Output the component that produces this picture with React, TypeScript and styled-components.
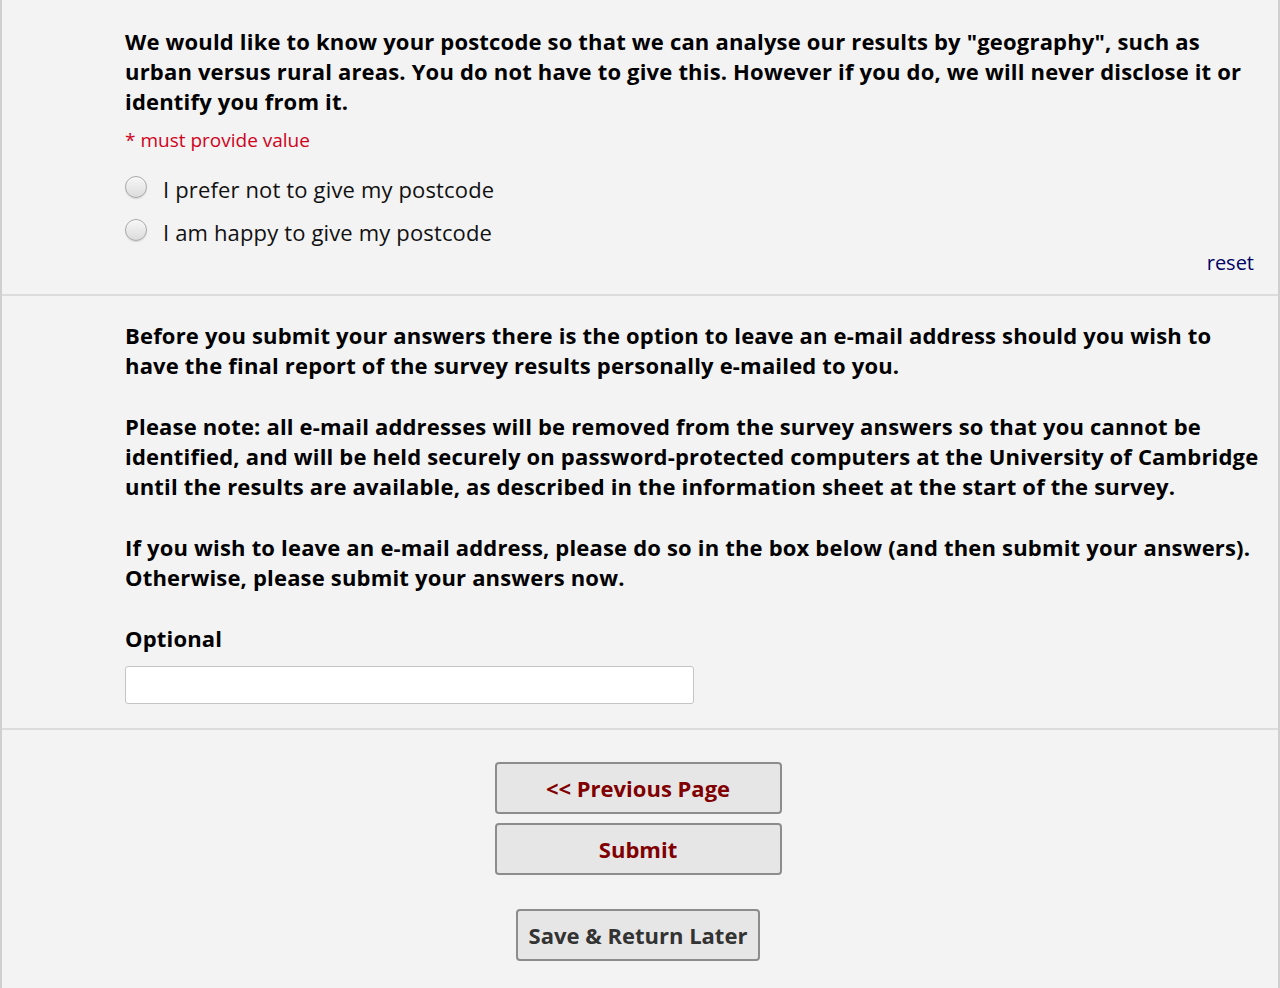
import React, { useState } from 'react'
import styled, { createGlobalStyle } from 'styled-components'

const GlobalStyle = createGlobalStyle`
  html, body {
    margin: 0;
    padding: 0;
    background: #f3f3f3;
  }
  body {
    font-family: 'Open Sans', 'Noto Sans', Arial, sans-serif;
    color: #000;
  }
`

const Page = styled.div`
  width: 1280px;
  min-height: 988px;
  box-sizing: border-box;
  border-left: 2px solid #cfcfcf;
  border-right: 2px solid #cfcfcf;
  background: #f3f3f3;
`

const Section = styled.div<{ $top?: number; $bottom?: number }>`
  padding: ${({ $top = 26 }) => $top}px 24px ${({ $bottom = 24 }) => $bottom}px 123px;
  border-bottom: 2px solid #dcdcdc;
`

const Question = styled.div`
  font-size: 22px;
  line-height: 30px;
  font-weight: 700;
  letter-spacing: 0.18px;
  white-space: nowrap;
`

const Para = styled(Question)`
  & + & {
    margin-top: 31px;
  }
`

const Required = styled.div`
  color: #d0021b;
  font-size: 19px;
  line-height: 26px;
  margin-top: 11px;
`

const Choices = styled.div`
  display: flex;
  flex-direction: column;
  gap: 13px;
  margin-top: 21px;
`

const Choice = styled.label`
  display: flex;
  align-items: center;
  gap: 16px;
  font-size: 22px;
  letter-spacing: 0.15px;
  line-height: 30px;
  color: #111;
  cursor: pointer;
`

const Radio = styled.span<{ $checked: boolean }>`
  width: 22px;
  height: 22px;
  margin-top: -5px;
  border-radius: 50%;
  box-sizing: border-box;
  border: 1px solid #a8a8a8;
  background: linear-gradient(#f7f7f7, #dcdcdc);
  box-shadow: inset 0 1px 1px rgba(255, 255, 255, 0.8), 0 1px 1px rgba(0, 0, 0, 0.12);
  display: flex;
  align-items: center;
  justify-content: center;
  flex-shrink: 0;

  &::after {
    content: '';
    width: 10px;
    height: 10px;
    border-radius: 50%;
    background: #333;
    display: ${({ $checked }) => ($checked ? 'block' : 'none')};
  }
`

const ResetRow = styled.div`
  display: flex;
  justify-content: flex-end;
  margin-top: 3px;
`

const ResetLink = styled.a`
  color: #000066;
  font-size: 20px;
  line-height: 26px;
  text-decoration: none;
  cursor: pointer;
`

const FieldLabel = styled(Question)`
  margin-top: 31px;
`

const TextInput = styled.input`
  display: block;
  margin-top: 13px;
  width: 569px;
  height: 38px;
  box-sizing: border-box;
  border: 1px solid #c4c4c4;
  border-radius: 3px;
  background: #fff;
  font-family: inherit;
  font-size: 18px;
  padding: 4px 8px;
  outline: none;
`

const Buttons = styled.div`
  display: flex;
  flex-direction: column;
  align-items: center;
  gap: 9px;
  padding: 32px 4px 0 0;
`

const SaveRow = styled.div`
  display: flex;
  justify-content: center;
  padding: 34px 4px 0 0;
`

const Button = styled.button<{ $width: number; $tone?: 'red' | 'dark' }>`
  width: ${({ $width }) => $width}px;
  height: 52px;
  box-sizing: border-box;
  border: 2px solid #8c8c8c;
  border-radius: 4px;
  background: #e6e6e6;
  font-family: inherit;
  font-size: 22px;
  font-weight: 700;
  color: ${({ $tone }) => ($tone === 'dark' ? '#333' : '#800000')};
  cursor: pointer;
  padding: 0;
`

export default function App() {
  const [choice, setChoice] = useState<number | null>(null)

  return (
    <Page>
      <GlobalStyle />

      <Section $top={26} $bottom={18}>
        <Question>
          We would like to know your postcode so that we can analyse our results by "geography", such as
          <br />
          urban versus rural areas. You do not have to give this. However if you do, we will never disclose it or
          <br />
          identify you from it.
        </Question>
        <Required>* must provide value</Required>

        <Choices>
          {['I prefer not to give my postcode', 'I am happy to give my postcode'].map((text, index) => (
            <Choice key={text} onClick={() => setChoice(index)}>
              <Radio $checked={choice === index} />
              {text}
            </Choice>
          ))}
        </Choices>

        <ResetRow>
          <ResetLink onClick={() => setChoice(null)}>reset</ResetLink>
        </ResetRow>
      </Section>

      <Section $top={24} $bottom={24}>
        <Para>
          Before you submit your answers there is the option to leave an e-mail address should you wish to
          <br />
          have the final report of the survey results personally e-mailed to you.
        </Para>
        <Para>
          Please note: all e-mail addresses will be removed from the survey answers so that you cannot be
          <br />
          identified, and will be held securely on password-protected computers at the University of Cambridge
          <br />
          until the results are available, as described in the information sheet at the start of the survey.
        </Para>
        <Para>
          If you wish to leave an e-mail address, please do so in the box below (and then submit your answers).
          <br />
          Otherwise, please submit your answers now.
        </Para>

        <FieldLabel>Optional</FieldLabel>
        <TextInput type="text" />
      </Section>

      <Buttons>
        <Button $width={287}>&lt;&lt; Previous Page</Button>
        <Button $width={287}>Submit</Button>
      </Buttons>
      <SaveRow>
        <Button $width={244} $tone="dark">
          Save &amp; Return Later
        </Button>
      </SaveRow>
    </Page>
  )
}
